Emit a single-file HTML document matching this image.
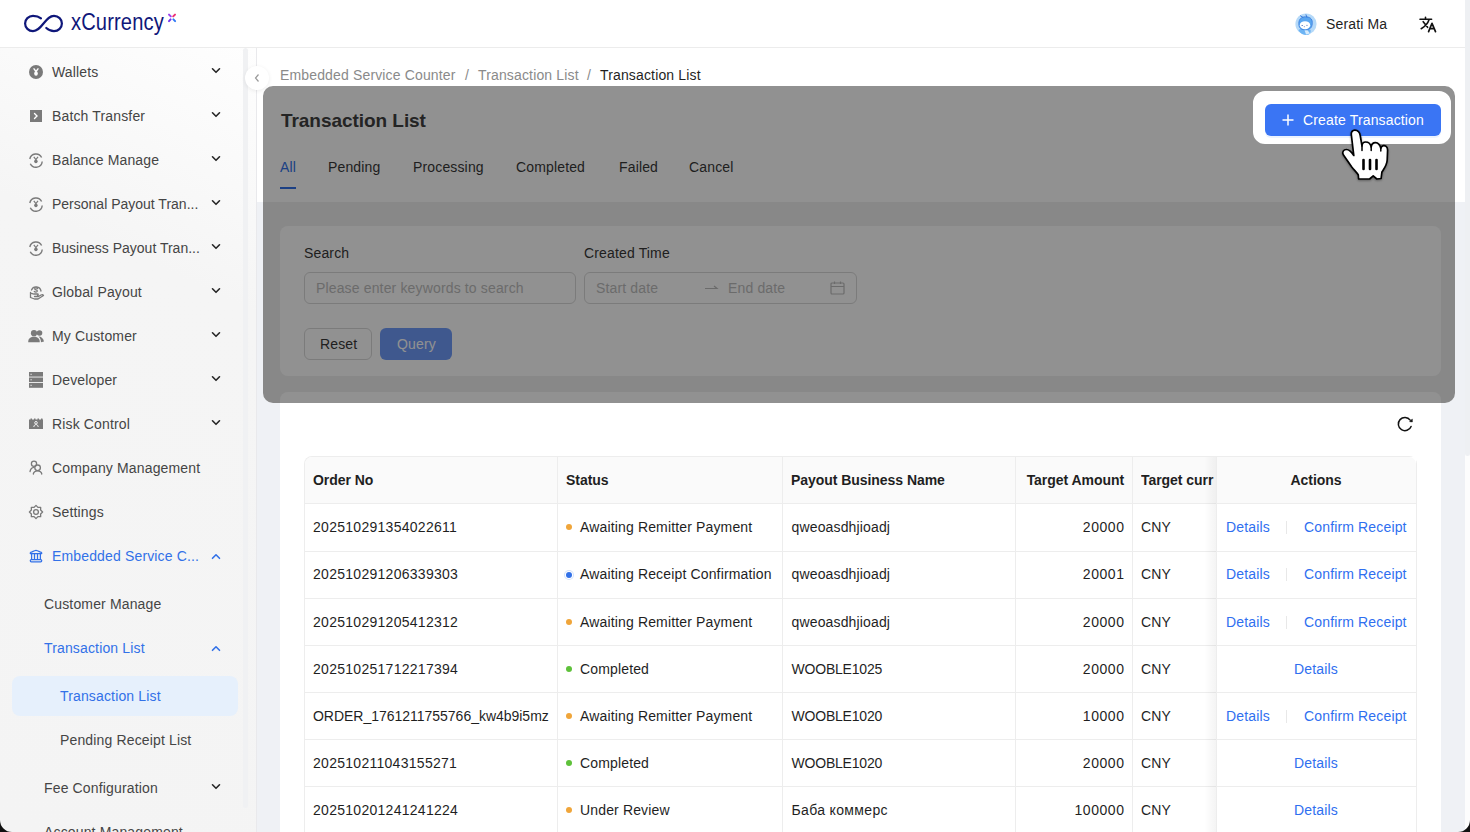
<!DOCTYPE html>
<html><head><meta charset="utf-8">
<style>
*{margin:0;padding:0;box-sizing:border-box}
html,body{width:1470px;height:832px;overflow:hidden;background:#fff;font-family:"Liberation Sans",sans-serif;font-size:14px;color:#1f1f1f;letter-spacing:0.15px}
.a{position:absolute}
.t{position:absolute;line-height:20px;white-space:nowrap}
#hdr{left:0;top:0;width:1465px;height:48px;background:#fff;border-bottom:1px solid #ececec}
#side{left:0;top:48px;width:256px;height:784px;background:linear-gradient(205deg,#fefefe 0,#f5f5f5 240px,#f4f4f4 100%)}
#sideb{left:256px;top:48px;width:1px;height:784px;background:#e9e9ec}
#main{left:257px;top:48px;width:1208px;height:784px;background:#eff1f5}
#phead{left:257px;top:48px;width:1208px;height:154px;background:#fff}
.si{color:#454545}
.sa{color:#3271e8}
.chev{position:absolute;width:10px;height:6px}
.card{position:absolute;background:#fff;border-radius:8px}
.ph{color:#bdbdbd}
.th{font-weight:bold;color:#1f1f1f;letter-spacing:-0.05px}
.hl{position:absolute;height:1px;background:#ededed}
.vl{position:absolute;width:1px;background:#ededed}
.lk{color:#2f6ff0}
.dot{position:absolute;width:6px;height:6px;border-radius:3px}
</style></head><body>

<!-- header -->
<div id="hdr" class="a"></div>
<svg class="a" style="left:0;top:0" width="180" height="48" viewBox="0 0 180 48">
<path d="M41 18.3 C38.5 16.3 36 15.9 33 15.9 C28.5 15.9 25.1 19.3 25.1 23.5 C25.1 27.7 28.5 31.1 33 31.1 C37 31.1 39.5 28.5 43.5 23.5 C47.5 18.5 50 15.9 54 15.9 C58.5 15.9 61.9 19.3 61.9 23.5 C61.9 27.7 58.5 31.1 54 31.1 C51 31.1 48.5 30 46.3 28" fill="none" stroke="#0f177a" stroke-width="2.2" stroke-linecap="round"/>
<path d="M169 14.6 L170.8 16.4" stroke="#9b3ff0" stroke-width="2" stroke-linecap="round"/>
<path d="M175 14.6 L173.2 16.4" stroke="#ef2f72" stroke-width="2" stroke-linecap="round"/>
<path d="M170.6 19.4 L169 21.1" stroke="#7334f0" stroke-width="2" stroke-linecap="round"/>
<path d="M173.4 19.4 L175.1 21.1" stroke="#2f78f5" stroke-width="2" stroke-linecap="round"/>
</svg>
<div class="t" style="left:71px;top:7px;font-size:23px;line-height:30px;color:#0f177a;transform:translateY(0.3px) scaleX(0.875);transform-origin:0 0">xCurrency</div>
<svg class="a" style="left:1293px;top:11px" width="26" height="26" viewBox="0 0 26 26">
<circle cx="13" cy="13.1" r="10.6" fill="#b5d9f8"/>
<path d="M5.5 19.5 C6 18 9 17.8 12 18.5 L17.5 18.8 C18 20.5 17.5 22.5 16 23.5 C13 24.5 8 23.8 5.5 19.5 Z" fill="#6db4f4"/>
<path d="M11.5 19 L14.5 19.2 L17 22.5 L13 23.5 Z" fill="#d6ebfc"/>
<path d="M5.8 12.5 C5.8 8 8.5 5.8 12.5 5.8 C16.5 5.8 19.3 7.5 19.3 11.5 C19.3 15 18.5 18.8 12.3 18.8 C7.5 18.8 5.8 16.5 5.8 12.5 Z" fill="#5aa6f0" stroke="#2f73d8" stroke-width="0.7"/>
<ellipse cx="12" cy="14.2" rx="5.2" ry="4" fill="#fff"/>
<path d="M8.5 14.5 H10 M13.3 14.4 H14.6 M10.8 15.7 H11.8" stroke="#3a5fb0" stroke-width="0.7"/>
<path d="M9.8 6.3 L7.5 4.8 M13.8 6 L13 3.8" stroke="#2f73d8" stroke-width="0.9" stroke-linecap="round"/>
</svg>
<div class="t" style="left:1326px;top:14px;color:#1f1f1f">Serati Ma</div>
<svg class="a" style="left:1414px;top:12px" width="28" height="24" viewBox="0 0 28 24">
<path d="M6 7.2 H17.6 M11.5 5.3 V7.2 M9.2 9.7 L13.6 15.3 M15 7.8 C14 11 12 14 7.2 16.7" fill="none" stroke="#111" stroke-width="1.6" stroke-linecap="round"/>
<path d="M14.6 19.6 L18 11.3 L21.5 19.6 M15.8 16.7 H20.3" fill="none" stroke="#111" stroke-width="1.7" stroke-linecap="round" stroke-linejoin="round"/>
</svg>

<!-- sidebar -->
<div id="side" class="a"></div>
<div class="a" style="left:243px;top:48px;width:5px;height:760px;border-radius:3px;background:#f0f1f3"></div>
<div id="sideb" class="a"></div>

<div id="menu">
<div class="t si" style="left:52px;top:62px">Wallets</div>
<div class="t si" style="left:52px;top:106px">Batch Transfer</div>
<div class="t si" style="left:52px;top:150px">Balance Manage</div>
<div class="t si" style="left:52px;top:194px;letter-spacing:0">Personal Payout Tran...</div>
<div class="t si" style="left:52px;top:238px;letter-spacing:0">Business Payout Tran...</div>
<div class="t si" style="left:52px;top:282px">Global Payout</div>
<div class="t si" style="left:52px;top:326px">My Customer</div>
<div class="t si" style="left:52px;top:370px">Developer</div>
<div class="t si" style="left:52px;top:414px">Risk Control</div>
<div class="t si" style="left:52px;top:458px">Company Management</div>
<div class="t si" style="left:52px;top:502px">Settings</div>
<div class="t sa" style="left:52px;top:546px">Embedded Service C...</div>
<div class="t si" style="left:44px;top:594px">Customer Manage</div>
<div class="t sa" style="left:44px;top:638px">Transaction List</div>
<div class="a" style="left:12px;top:676px;width:226px;height:40px;border-radius:8px;background:#e6f0fc"></div>
<div class="t sa" style="left:60px;top:686px">Transaction List</div>
<div class="t si" style="left:60px;top:730px">Pending Receipt List</div>
<div class="t si" style="left:44px;top:778px">Fee Configuration</div>
<div class="t si" style="left:44px;top:822px">Account Management</div>
</div>
<!-- chevrons -->
<svg class="a" style="left:0;top:0" width="256" height="832">
<g fill="none" stroke="#262626" stroke-width="1.6" stroke-linecap="round" stroke-linejoin="round">
<path d="M212.5 68.8 L216 72.3 L219.5 68.8"/>
<path d="M212.5 112.8 L216 116.3 L219.5 112.8"/>
<path d="M212.5 156.8 L216 160.3 L219.5 156.8"/>
<path d="M212.5 200.8 L216 204.3 L219.5 200.8"/>
<path d="M212.5 244.8 L216 248.3 L219.5 244.8"/>
<path d="M212.5 288.8 L216 292.3 L219.5 288.8"/>
<path d="M212.5 332.8 L216 336.3 L219.5 332.8"/>
<path d="M212.5 376.8 L216 380.3 L219.5 376.8"/>
<path d="M212.5 420.8 L216 424.3 L219.5 420.8"/>
<path d="M212.5 784.8 L216 788.3 L219.5 784.8"/>
</g>
<g fill="none" stroke="#3271e8" stroke-width="1.6" stroke-linecap="round" stroke-linejoin="round">
<path d="M212.5 558.3 L216 554.8 L219.5 558.3"/>
<path d="M212.5 650.3 L216 646.8 L219.5 650.3"/>
</g>
<!-- icons -->
<g fill="#7a7a7a">
<circle cx="36" cy="72" r="7"/>
<rect x="30" y="110" width="12" height="12"/>
</g>
<g fill="none" stroke="#fff" stroke-width="1.4" stroke-linecap="round">
<path d="M34 68.8 L36 71.5 L38 68.8"/>
<path d="M34.5 113.5 L37 116 L34.5 118.5"/>
</g>
<ellipse cx="36" cy="73.5" rx="1.8" ry="2.2" fill="#fff"/>
<g fill="none" stroke="#7a7a7a" stroke-width="1.4">
<path d="M29.8 159 A6.3 6.3 0 0 1 41.6 157.5 M42.2 161.5 A6.3 6.3 0 0 1 30.3 163.8"/>
<path d="M29.8 203 A6.3 6.3 0 0 1 41.6 201.5 M42.2 205.5 A6.3 6.3 0 0 1 30.3 207.8"/>
<path d="M29.8 247 A6.3 6.3 0 0 1 41.6 245.5 M42.2 249.5 A6.3 6.3 0 0 1 30.3 251.8"/>
</g>
<g fill="#7a7a7a">
<path d="M33.8 156.8 L35.9 159.6 L38 156.8" fill="none" stroke="#7a7a7a" stroke-width="1.2"/>
<ellipse cx="35.9" cy="161.3" rx="1.7" ry="1.9"/>
<path d="M33.8 200.8 L35.9 203.6 L38 200.8" fill="none" stroke="#7a7a7a" stroke-width="1.2"/>
<ellipse cx="35.9" cy="205.3" rx="1.7" ry="1.9"/>
<path d="M33.8 244.8 L35.9 247.6 L38 244.8" fill="none" stroke="#7a7a7a" stroke-width="1.2"/>
<ellipse cx="35.9" cy="249.3" rx="1.7" ry="1.9"/>
</g>
<g fill="none" stroke="#7a7a7a" stroke-width="1.3" stroke-linecap="round" stroke-linejoin="round">
<path d="M31.5 290 A5 5 0 0 1 41 291"/>
<path d="M37.5 288.5 C36.5 287.5 34.5 287.8 34.8 289 C35.2 290.2 37.5 289.8 37.3 291.2 C37 292.5 35 292.2 34.3 291.5"/>
<path d="M30.5 292.5 V297.5 L34.5 299 H38 L43.5 295.5 C43 294.5 42 294.5 41 295 L38.5 296.5 H34.5 M30.5 293 L34 294 H37.5 C38.5 294 38.5 295.5 37.5 295.5"/>
<circle cx="34" cy="463.8" r="2.6"/>
<path d="M30 471.5 C30.5 469 32 467.5 34 467.3"/>
<circle cx="37.6" cy="467.8" r="2.8"/>
<path d="M33.3 474 C33.8 471.5 35.5 470.8 37.6 470.8 C39.7 470.8 41.3 471.5 41.8 474"/>
<path d="M36.00 505.40 L37.91 507.38 L40.67 507.33 L40.62 510.09 L42.60 512.00 L40.62 513.91 L40.67 516.67 L37.91 516.62 L36.00 518.60 L34.09 516.62 L31.33 516.67 L31.38 513.91 L29.40 512.00 L31.38 510.09 L31.33 507.33 L34.09 507.38 Z"/>
<circle cx="36" cy="512" r="2.4"/>
</g>
<g fill="#7a7a7a">
<circle cx="34" cy="333.2" r="3.1"/><circle cx="39.5" cy="333" r="2.8"/>
<path d="M28.2 342.2 C28.2 338.2 30.8 336.8 34 336.8 C37.2 336.8 39.8 338.2 39.8 342.2 Z"/>
<path d="M38.5 336.5 C41.5 336.5 43.5 338.5 44 341.5 L41 342.2 C40.8 339.5 40 337.8 38.5 336.5 Z"/>
<rect x="29" y="372" width="14" height="4.6"/><rect x="29" y="377.5" width="14" height="4.6"/><rect x="29" y="383" width="14" height="4.8"/>
<path d="M29 419.5 H30.5 V418.5 H32 V419.5 H34 V418.5 H35.5 V419.5 H37.5 V418.5 H39 V419.5 H41 V418.5 H42.5 V419.5 H43 V429 H29 Z"/>
</g>
<g fill="#f4f4f4">
<rect x="30.5" y="373.8" width="1.2" height="1"/><rect x="30.5" y="379.3" width="1.2" height="1"/><rect x="30.5" y="384.8" width="1.2" height="1"/>
</g>
<g fill="none" stroke="#f4f4f4" stroke-width="1">
<circle cx="36" cy="422.8" r="1.3"/><path d="M33.8 427 C34 425.2 35 424.6 36 424.6 C37 424.6 38 425.2 38.2 427"/>
</g>
<g fill="none" stroke="#3271e8" stroke-width="1.25" stroke-linejoin="round">
<path d="M30.3 553.6 C30 552.6 31 552.2 32 551.9 L34.5 550.8 C35.5 550.2 36.5 550.2 37.5 550.8 L40 551.9 C41 552.2 42 552.6 41.7 553.6 Z"/>
<path d="M31.6 553.8 V559.5 M34.5 553.8 V559.5 M37.5 553.8 V559.5 M40.4 553.8 V559.5"/>
<rect x="30.3" y="559.6" width="11.4" height="2.2" rx="1"/>
</g>
</svg>

<!-- main -->
<div id="main" class="a"></div>
<div id="phead" class="a"></div>
<div class="a" style="left:263px;top:202px;width:1192px;height:201px;background:#efefef;border-radius:0 0 10px 10px"></div>
<!-- collapse btn -->
<div class="a" style="left:245px;top:66px;width:24px;height:24px;border-radius:12px;background:#fff;box-shadow:0 1px 4px rgba(0,0,0,.08)"></div>
<svg class="a" style="left:252px;top:72px" width="10" height="12"><path d="M6.5 2.5 L3.5 6 L6.5 9.5" fill="none" stroke="#9a9a9a" stroke-width="1.2"/></svg>

<div class="t" style="left:280px;top:65px;color:#8a8a8a">Embedded Service Counter</div>
<div class="t" style="left:465px;top:65px;color:#8a8a8a">/</div>
<div class="t" style="left:478px;top:65px;color:#8a8a8a">Transaction List</div>
<div class="t" style="left:587px;top:65px;color:#8a8a8a">/</div>
<div class="t" style="left:600px;top:65px;color:#1f1f1f">Transaction List</div>

<div class="t" style="left:281px;top:108px;font-size:19px;line-height:26px;font-weight:bold;color:#404040;letter-spacing:-0.05px">Transaction List</div>

<div class="t" style="left:280px;top:157px;color:#3271e8">All</div>
<div class="a" style="left:280px;top:187px;width:16px;height:2px;background:#3271e8"></div>
<div class="t" style="left:328px;top:157px;color:#383838">Pending</div>
<div class="t" style="left:413px;top:157px;color:#383838">Processing</div>
<div class="t" style="left:516px;top:157px;color:#383838">Completed</div>
<div class="t" style="left:619px;top:157px;color:#383838">Failed</div>
<div class="t" style="left:689px;top:157px;color:#383838">Cancel</div>

<!-- Create Transaction btn -->
<div class="a" style="left:1265px;top:104px;width:176px;height:32px;border-radius:6px;background:#3a75f4;box-shadow:0 2px 0 rgba(5,100,255,0.08)"></div>
<svg class="a" style="left:1282px;top:114px" width="12" height="12"><path d="M6 0.5 V11.5 M0.5 6 H11.5" stroke="#fff" stroke-width="1.5"/></svg>
<div class="t" style="left:1303px;top:110px;color:#fff">Create Transaction</div>

<!-- search card -->
<div class="card" style="left:280px;top:226px;width:1161px;height:150px"></div>
<div class="t" style="left:304px;top:243px;color:#383838">Search</div>
<div class="a" style="left:304px;top:272px;width:272px;height:32px;border:1px solid #d9d9d9;border-radius:6px"></div>
<div class="t ph" style="left:316px;top:278px">Please enter keywords to search</div>
<div class="t" style="left:584px;top:243px;color:#383838">Created Time</div>
<div class="a" style="left:584px;top:272px;width:273px;height:32px;border:1px solid #d9d9d9;border-radius:6px"></div>
<div class="t ph" style="left:596px;top:278px">Start date</div>
<svg class="a" style="left:704px;top:284px" width="16" height="8"><path d="M1 4.5 H13 L10 2" fill="none" stroke="#bdbdbd" stroke-width="1.2"/></svg>
<div class="t ph" style="left:728px;top:278px">End date</div>
<svg class="a" style="left:830px;top:281px" width="15" height="14"><rect x="1" y="2" width="13" height="11" rx="1" fill="none" stroke="#bdbdbd" stroke-width="1.2"/><path d="M1 5.5 H14 M4.5 0.5 V3 M10.5 0.5 V3" stroke="#bdbdbd" stroke-width="1.2"/></svg>
<div class="a" style="left:304px;top:328px;width:68px;height:32px;border:1px solid #d9d9d9;border-radius:6px"></div>
<div class="t" style="left:320px;top:334px;color:#383838">Reset</div>
<div class="a" style="left:380px;top:328px;width:72px;height:32px;border-radius:6px;background:#6f9cfa"></div>
<div class="t" style="left:397px;top:334px;color:#fff">Query</div>

<!-- table card -->
<div class="card" style="left:280px;top:392px;width:1161px;height:460px"></div>
<svg class="a" style="left:1393px;top:412px" width="24" height="24" viewBox="0 0 24 24"><path d="M17.2 8.1 A6.6 6.6 0 1 0 18.1 14.4" fill="none" stroke="#111" stroke-width="1.5" stroke-linecap="round"/><path d="M16.6 9.7 L19.3 6.9 L19.4 9.9 Z" fill="#111" stroke="#111" stroke-width="0.5" stroke-linejoin="round"/></svg>

<div id="table" class="a" style="left:304px;top:456px;width:1113px;height:400px;border:1px solid #ededed;border-bottom:none;border-radius:8px 8px 0 0;overflow:hidden">
 <div class="a" style="left:0;top:0;width:1113px;height:47px;background:#fafafa"></div>
</div>
<div id="rows">
<div class="t th" style="left:313px;top:470px">Order No</div>
<div class="t th" style="left:566px;top:470px">Status</div>
<div class="t th" style="left:791px;top:470px">Payout Business Name</div>
<div class="t th" style="left:1015px;top:470px;width:109px;text-align:right">Target Amount</div>
<div class="a" style="left:1141px;top:470px;width:75px;height:20px;overflow:hidden"><div class="t th" style="left:0;top:0">Target curr</div></div>
<div class="hl" style="left:305px;top:503px;width:1111px"></div>
<div class="hl" style="left:305px;top:551px;width:1111px"></div>
<div class="hl" style="left:305px;top:598px;width:1111px"></div>
<div class="hl" style="left:305px;top:645px;width:1111px"></div>
<div class="hl" style="left:305px;top:692px;width:1111px"></div>
<div class="hl" style="left:305px;top:739px;width:1111px"></div>
<div class="hl" style="left:305px;top:786px;width:1111px"></div>
<div class="hl" style="left:305px;top:833px;width:1111px"></div>
<div class="vl" style="left:557px;top:457px;height:380px"></div>
<div class="vl" style="left:782px;top:457px;height:380px"></div>
<div class="vl" style="left:1015px;top:457px;height:380px"></div>
<div class="vl" style="left:1132px;top:457px;height:380px"></div>
<div class="a" style="left:1204px;top:457px;width:12px;height:380px;background:linear-gradient(90deg,rgba(0,0,0,0),rgba(0,0,0,0.045))"></div>
<div class="a" style="left:1216px;top:457px;width:200px;height:380px;background:#fff;border-left:1px solid #ededed"></div>
<div class="a" style="left:1217px;top:457px;width:199px;height:46px;background:#fafafa;border-radius:0 7px 0 0"></div>
<div class="hl" style="left:1217px;top:503px;width:199px"></div>
<div class="hl" style="left:1217px;top:551px;width:199px"></div>
<div class="hl" style="left:1217px;top:598px;width:199px"></div>
<div class="hl" style="left:1217px;top:645px;width:199px"></div>
<div class="hl" style="left:1217px;top:692px;width:199px"></div>
<div class="hl" style="left:1217px;top:739px;width:199px"></div>
<div class="hl" style="left:1217px;top:786px;width:199px"></div>
<div class="hl" style="left:1217px;top:833px;width:199px"></div>
<div class="vl" style="left:1416px;top:464px;height:380px"></div>
<div class="t th" style="left:1216px;top:470px;width:200px;text-align:center">Actions</div>
<div class="t" style="left:313px;top:517.2px;letter-spacing:0.28px">202510291354022611</div>
<div class="dot" style="left:565.5px;top:524.4px;background:#f0a53a"></div>
<div class="t" style="left:580px;top:517.2px">Awaiting Remitter Payment</div>
<div class="t" style="left:791.5px;top:517.2px;letter-spacing:0.15px">qweoasdhjioadj</div>
<div class="t" style="left:1015px;top:517.2px;width:109.5px;text-align:right;letter-spacing:0.55px">20000</div>
<div class="t" style="left:1141px;top:517.2px">CNY</div>
<div class="t lk" style="left:1226px;top:517.2px">Details</div>
<div class="vl" style="left:1286px;top:521px;height:13px;background:#e8e8e8"></div>
<div class="t lk" style="left:1304px;top:517.2px">Confirm Receipt</div>
<div class="t" style="left:313px;top:564.4px;letter-spacing:0.28px">202510291206339303</div>
<div class="dot" style="left:565.5px;top:571.5px;background:#3271e8;box-shadow:0 0 0 1px #fff,0 0 0 2px #d3e2fb"></div>
<div class="t" style="left:580px;top:564.4px">Awaiting Receipt Confirmation</div>
<div class="t" style="left:791.5px;top:564.4px;letter-spacing:0.15px">qweoasdhjioadj</div>
<div class="t" style="left:1015px;top:564.4px;width:109.5px;text-align:right;letter-spacing:0.55px">20001</div>
<div class="t" style="left:1141px;top:564.4px">CNY</div>
<div class="t lk" style="left:1226px;top:564.4px">Details</div>
<div class="vl" style="left:1286px;top:568px;height:13px;background:#e8e8e8"></div>
<div class="t lk" style="left:1304px;top:564.4px">Confirm Receipt</div>
<div class="t" style="left:313px;top:611.5px;letter-spacing:0.28px">202510291205412312</div>
<div class="dot" style="left:565.5px;top:618.7px;background:#f0a53a"></div>
<div class="t" style="left:580px;top:611.5px">Awaiting Remitter Payment</div>
<div class="t" style="left:791.5px;top:611.5px;letter-spacing:0.15px">qweoasdhjioadj</div>
<div class="t" style="left:1015px;top:611.5px;width:109.5px;text-align:right;letter-spacing:0.55px">20000</div>
<div class="t" style="left:1141px;top:611.5px">CNY</div>
<div class="t lk" style="left:1226px;top:611.5px">Details</div>
<div class="vl" style="left:1286px;top:616px;height:13px;background:#e8e8e8"></div>
<div class="t lk" style="left:1304px;top:611.5px">Confirm Receipt</div>
<div class="t" style="left:313px;top:658.7px;letter-spacing:0.28px">202510251712217394</div>
<div class="dot" style="left:565.5px;top:665.8px;background:#5ec13a"></div>
<div class="t" style="left:580px;top:658.7px">Completed</div>
<div class="t" style="left:791.5px;top:658.7px;letter-spacing:-0.2px">WOOBLE1025</div>
<div class="t" style="left:1015px;top:658.7px;width:109.5px;text-align:right;letter-spacing:0.55px">20000</div>
<div class="t" style="left:1141px;top:658.7px">CNY</div>
<div class="t lk" style="left:1216px;top:658.7px;width:200px;text-align:center">Details</div>
<div class="t" style="left:313px;top:705.8px;letter-spacing:-0.02px">ORDER_1761211755766_kw4b9i5mz</div>
<div class="dot" style="left:565.5px;top:713.0px;background:#f0a53a"></div>
<div class="t" style="left:580px;top:705.8px">Awaiting Remitter Payment</div>
<div class="t" style="left:791.5px;top:705.8px;letter-spacing:-0.2px">WOOBLE1020</div>
<div class="t" style="left:1015px;top:705.8px;width:109.5px;text-align:right;letter-spacing:0.55px">10000</div>
<div class="t" style="left:1141px;top:705.8px">CNY</div>
<div class="t lk" style="left:1226px;top:705.8px">Details</div>
<div class="vl" style="left:1286px;top:710px;height:13px;background:#e8e8e8"></div>
<div class="t lk" style="left:1304px;top:705.8px">Confirm Receipt</div>
<div class="t" style="left:313px;top:753.0px;letter-spacing:0.28px">202510211043155271</div>
<div class="dot" style="left:565.5px;top:760.1px;background:#5ec13a"></div>
<div class="t" style="left:580px;top:753.0px">Completed</div>
<div class="t" style="left:791.5px;top:753.0px;letter-spacing:-0.2px">WOOBLE1020</div>
<div class="t" style="left:1015px;top:753.0px;width:109.5px;text-align:right;letter-spacing:0.55px">20000</div>
<div class="t" style="left:1141px;top:753.0px">CNY</div>
<div class="t lk" style="left:1216px;top:753.0px;width:200px;text-align:center">Details</div>
<div class="t" style="left:313px;top:800.1px;letter-spacing:0.28px">202510201241241224</div>
<div class="dot" style="left:565.5px;top:807.3px;background:#f0a53a"></div>
<div class="t" style="left:580px;top:800.1px">Under Review</div>
<div class="t" style="left:791.5px;top:800.1px;letter-spacing:0.35px">Баба коммерс</div>
<div class="t" style="left:1015px;top:800.1px;width:109.5px;text-align:right;letter-spacing:0.55px">100000</div>
<div class="t" style="left:1141px;top:800.1px">CNY</div>
<div class="t lk" style="left:1216px;top:800.1px;width:200px;text-align:center">Details</div>
</div>

<!-- overlay -->
<svg class="a" style="left:0;top:0" width="1470" height="832">
<path fill-rule="evenodd" fill="rgba(0,0,0,0.43)" d="M273 86 H1445 A10 10 0 0 1 1455 96 V393 A10 10 0 0 1 1445 403 H273 A10 10 0 0 1 263 393 V96 A10 10 0 0 1 273 86 Z M1265 91 H1439 A12 12 0 0 1 1451 103 V132 A12 12 0 0 1 1439 144 H1265 A12 12 0 0 1 1253 132 V103 A12 12 0 0 1 1265 91 Z"/>
</svg>

<!-- scroll track -->
<div class="a" style="left:1465px;top:0;width:5px;height:832px;background:#fdfdfd"></div><div class="a" style="left:1465px;top:0;width:5px;height:456px;border-radius:0 0 3px 3px;background:#eef0f3"></div>

<!-- cursor -->
<svg class="a" style="left:1335px;top:125px;overflow:visible" width="60" height="60" viewBox="0 0 60 60">
<defs><filter id="sh" x="-30%" y="-30%" width="160%" height="160%"><feDropShadow dx="0" dy="1" stdDeviation="1.2" flood-color="#000" flood-opacity="0.35"/></filter></defs>
<path filter="url(#sh)" d="M19.8 5.2 C17.5 5.2 16 7 16.3 9.5 L18.8 30.5 C16.5 27 14 24.5 11.5 24.5 C8.5 24.5 6.8 27 8.3 29.8 L16.6 41.8 C19 45 21.8 47.5 23.3 50 L23.6 54 L34.6 54 L38.2 50.8 L41.8 54 L46.1 53.5 L46.9 47 C49.5 43 52 40 52.2 35 L52.6 25 C52.6 21.5 50 20.3 48.5 20.6 C47 20.9 46 22 45.8 23.5 C45.5 20 43 17.7 40.5 17.7 C38 17.7 36.5 19.5 36.2 22 C35.5 18.5 33 17 30.5 17 C28.5 17 27.2 18.5 27 21 L25.3 11 C24.8 7.5 22.8 5.2 19.8 5.2 Z" fill="#fff" stroke="#000" stroke-width="1.7" stroke-linejoin="round"/>
<path d="M27 21 V25.5 M36.2 22 V25.5 M45.8 23.5 V26" stroke="#000" stroke-width="1.5" fill="none" stroke-linecap="round"/>
<rect x="27.2" y="33.8" width="2.6" height="11.4" rx="1.3" fill="#000"/>
<rect x="33.7" y="33.8" width="2.6" height="11.4" rx="1.3" fill="#000"/>
<rect x="40.2" y="33.8" width="2.6" height="11.4" rx="1.3" fill="#000"/>
</svg>

<!-- window corners -->
<svg class="a" style="left:0;top:820px" width="12" height="12"><path d="M0 0 V12 H12 A12 12 0 0 1 0 0 Z" fill="#111"/></svg>
<svg class="a" style="left:1458px;top:820px" width="12" height="12"><path d="M12 0 V12 H0 A12 12 0 0 0 12 0 Z" fill="#111"/></svg>

</body></html>
